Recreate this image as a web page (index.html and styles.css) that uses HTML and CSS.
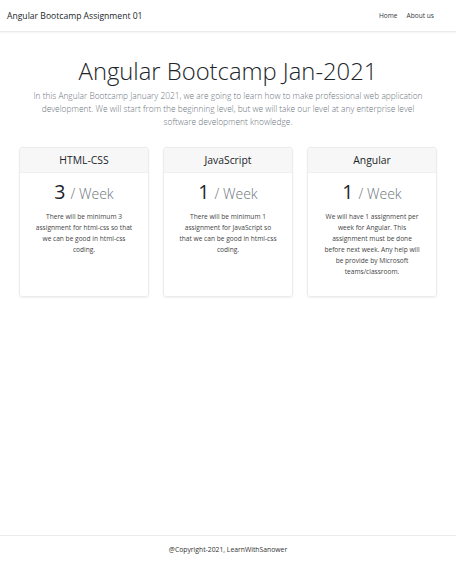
FILE: index.html
```html
<!DOCTYPE html>
<html lang="en">
<head>
<meta charset="utf-8">
<title>Angular Bootcamp Assignment 01</title>
<link rel="stylesheet" href="styles.css">
</head>
<body>
<header class="navbar">
  <span class="brand">Angular Bootcamp Assignment 01</span>
  <nav class="nav">
    <a class="nav-link" href="#">Home</a>
    <a class="nav-link" href="#">About us</a>
  </nav>
</header>
<main class="main">
  <section class="hero">
    <h1 class="title">Angular Bootcamp Jan-2021</h1>
    <p class="lead">In this Angular Bootcamp January 2021, we are going to learn how to make professional web application development. We will start from the beginning level, but we will take our level at any enterprise level software development knowledge.</p>
  </section>
  <section class="cards">
    <div class="card">
      <div class="card-header">HTML-CSS</div>
      <div class="card-body">
        <div class="count">3 <small>/ Week</small></div>
        <p class="desc">There will be minimum 3 assignment for html-css so that we can be good in html-css coding.</p>
      </div>
    </div>
    <div class="card">
      <div class="card-header">JavaScript</div>
      <div class="card-body">
        <div class="count">1 <small>/ Week</small></div>
        <p class="desc">There will be minimum 1 assignment for JavaScript so that we can be good in html-css coding.</p>
      </div>
    </div>
    <div class="card">
      <div class="card-header">Angular</div>
      <div class="card-body">
        <div class="count">1 <small>/ Week</small></div>
        <p class="desc">We will have 1 assignment per week for Angular. This assignment must be done before next week. Any help will be provide by Microsoft teams/classroom.</p>
      </div>
    </div>
  </section>
</main>
<footer class="footer">@Copyright-2021, LearnWithSanower</footer>
</body>
</html>
```
FILE: styles.css
```css
html, body {
  margin: 0;
  padding: 0;
  height: 100%;
}
body {
  font-family: "Open Sans", "Noto Sans", sans-serif;
  color: #212529;
  background: #fff;
  display: flex;
  flex-direction: column;
  min-height: 568px;
}
.navbar {
  height: 32px;
  display: flex;
  align-items: center;
  justify-content: space-between;
  padding: 0 22px 0 7px;
  border-bottom: 1px solid #ececec;
  box-shadow: 0 1px 2px rgba(0,0,0,0.05);
  box-sizing: border-box;
}
.brand {
  font-size: 8.6px;
  color: #212529;
}
.nav {
  display: flex;
  gap: 9px;
}
.nav-link {
  font-size: 6.6px;
  color: #343a40;
  text-decoration: none;
}
.main {
  flex: 1;
}
.hero {
  text-align: center;
  padding: 24px 28px 0;
}
.title {
  margin: 0;
  font-size: 23.8px;
  font-weight: 300;
  line-height: 31px;
}
.lead {
  margin: 2px 0 0;
  font-size: 8.4px;
  font-weight: 300;
  line-height: 13px;
  color: #6c757d;
}
.cards {
  display: flex;
  gap: 14px;
  padding: 0 19px;
  margin-top: 19px;
}
.card {
  flex: 1;
  height: 150px;
  border: 1px solid #ebebeb;
  border-radius: 3px;
  box-shadow: 0 1px 2px rgba(0,0,0,0.06);
  overflow: hidden;
  box-sizing: border-box;
}
.card-header {
  height: 25px;
  display: flex;
  align-items: center;
  justify-content: center;
  background: #f7f7f7;
  border-bottom: 1px solid #efefef;
  font-size: 10.4px;
  box-sizing: border-box;
}
.card-body {
  text-align: center;
  padding: 6px 15px;
}
.count {
  font-size: 19.5px;
  line-height: 25px;
  font-weight: 400;
}
.count small {
  font-size: 14px;
  font-weight: 300;
  color: #6c757d;
}
.desc {
  margin: 5px 0 0;
  font-size: 6.6px;
  line-height: 11px;
  color: #444;
}
.footer {
  height: 33px;
  border-top: 1px solid #ececec;
  display: flex;
  align-items: flex-start;
  justify-content: center;
  padding-top: 9px;
  box-sizing: border-box;
  font-size: 6.8px;
  color: #333;
}
```
